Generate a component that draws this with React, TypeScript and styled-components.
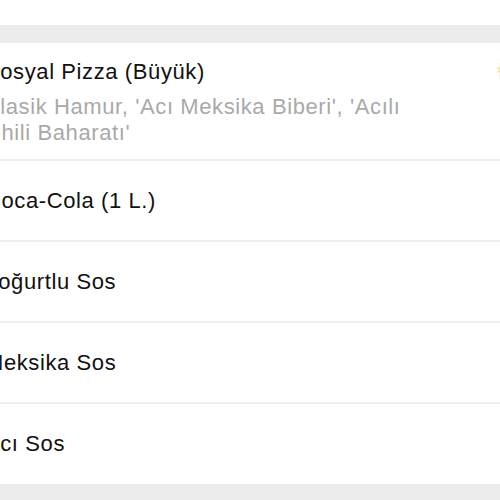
import React from "react";
import styled, { createGlobalStyle } from "styled-components";

const GlobalStyle = createGlobalStyle`
  html, body {
    margin: 0;
    padding: 0;
    background: #ffffff;
    font-family: "Liberation Sans", Arial, sans-serif;
    -webkit-font-smoothing: antialiased;
  }
`;

const Viewport = styled.div`
  width: 500px;
  height: 500px;
  overflow: hidden;
  background: #ffffff;
`;

// the screen is wider than the shot, so the sheet starts a little to the left
const Sheet = styled.div`
  width: 560px;
  margin-left: -15px;
  padding-top: 25px;
`;

const Band = styled.div<{ height: number }>`
  height: ${p => p.height}px;
  background: #ececec;
`;

const List = styled.div`
  background: #ffffff;
`;

const Row = styled.div<{ tall?: boolean }>`
  display: flex;
  align-items: ${p => (p.tall ? "flex-start" : "center")};
  justify-content: space-between;
  box-sizing: border-box;
  height: ${p => (p.tall ? 118 : 81)}px;
  padding: ${p => (p.tall ? "16px 0 0 0" : "0")};
  border-bottom: 2px solid #efefef;

  &:last-child {
    border-bottom: none;
    height: 80px;
  }
`;

const Texts = styled.div`
  display: flex;
  flex-direction: column;
  width: 445px;
`;

const Title = styled.div`
  font-size: 22px;
  line-height: 26px;
  color: #111111;
  letter-spacing: 0.6px;
`;

const Subtitle = styled.div`
  margin-top: 9px;
  font-size: 22px;
  line-height: 26px;
  color: #a9a9a9;
  letter-spacing: 0.6px;
`;

const Price = styled.div`
  width: 48px;
  font-size: 22px;
  line-height: 26px;
  color: #f6dc94;
  white-space: nowrap;
`;

type Item = { name: string; detail?: string; price?: string };

const items: Item[] = [
  {
    name: "Sosyal Pizza (Büyük)",
    detail: "Klasik Hamur, 'Acı Meksika Biberi', 'Acılı Chili Baharatı'",
    price: "₺48,90",
  },
  { name: "Coca-Cola (1 L.)" },
  { name: "Yoğurtlu Sos" },
  { name: "Meksika Sos" },
  { name: "Acı Sos" },
];

export default function App() {
  return (
    <Viewport>
      <GlobalStyle />
      <Sheet>
        <Band height={18} />
        <List>
          {items.map(it => (
            <Row key={it.name} tall={!!it.detail}>
              <Texts>
                <Title>{it.name}</Title>
                {it.detail && <Subtitle>{it.detail}</Subtitle>}
              </Texts>
              {it.price && <Price>{it.price}</Price>}
            </Row>
          ))}
        </List>
        <Band height={40} />
      </Sheet>
    </Viewport>
  );
}
